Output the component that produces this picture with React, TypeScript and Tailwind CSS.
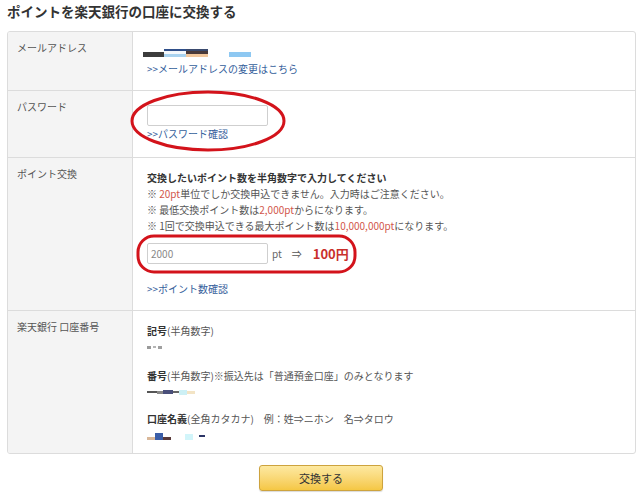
import React from "react";

const font = { fontFamily: '"Noto Sans CJK JP", "Noto Sans", sans-serif' };

function Label({ children }: { children: React.ReactNode }) {
  return (
    <div className="w-[125px] shrink-0 border-r border-[#dcdcdc] bg-[#f4f4f4] pl-[9px] pt-2 text-[10px] leading-4 text-[#555]">
      {children}
    </div>
  );
}

function Link({ children }: { children: React.ReactNode }) {
  return <div className="h-4 text-[10px] leading-4 text-[#35609b]">{children}</div>;
}

function Red({ children }: { children: React.ReactNode }) {
  return <span className="text-[#d2574c]">{children}</span>;
}

export default function App() {
  return (
    <div className="relative h-[495px] w-[642px] bg-white text-[#555]" style={font}>
      <div className="px-[7px]">
        {/* Title */}
        <div className="flex h-[31px] items-start pt-[2px] text-[13.5px] font-bold leading-[18px] text-[#333]">
          ポイントを楽天銀行の口座に交換する
        </div>

        {/* Form table */}
        <div className="w-[629px] overflow-hidden rounded-[3px] border border-[#dcdcdc]">
          {/* Mail */}
          <div className="flex h-[59px] border-b border-[#dcdcdc]">
            <Label>メールアドレス</Label>
            <div className="flex-1 pl-[10px] pt-[13px]">
              <div className="flex h-4 items-center">
                <span className="mt-[3px] h-[5px] w-[21px] bg-[#3c3c3c]" />
                <span className="flex h-[8px] w-[22px] flex-col">
                  <span className="h-[2px] bg-[#2f4f8a]" />
                  <span className="h-[3px] bg-[#f4f8fc]" />
                  <span className="h-[3px] bg-[#a9d3f0]" />
                </span>
                <span className="flex h-[8px] w-[22px] flex-col">
                  <span className="h-[2px] bg-[#3a4a6e]" />
                  <span className="h-[3px] bg-[#4a3a3a]" />
                  <span className="h-[3px] bg-[#f2c79c]" />
                </span>
                <span className="ml-[21px] mt-[3px] h-[5px] w-[22px] bg-[#8ec8f2]" />
              </div>
              <div className="pl-[4px]">
                <Link>&gt;&gt;メールアドレスの変更はこちら</Link>
              </div>
            </div>
          </div>

          {/* Password */}
          <div className="flex h-[67px] border-b border-[#dcdcdc]">
            <Label>パスワード</Label>
            <div className="flex-1 pl-[14px] pt-[14px]">
              <div className="h-[21px] w-[121px] rounded-[2px] border border-[#cfcfcf] bg-white" />
              <Link>&gt;&gt;パスワード確認</Link>
            </div>
          </div>

          {/* Points */}
          <div className="flex h-[153px] border-b border-[#dcdcdc]">
            <Label>ポイント交換</Label>
            <div className="flex-1 pl-[14px] pt-[12px] text-[10px] leading-4">
              <div className="font-bold text-[#333]">交換したいポイント数を半角数字で入力してください</div>
              <div>
                ※ <Red>20pt</Red>単位でしか交換申込できません。入力時はご注意ください。
              </div>
              <div>
                ※ 最低交換ポイント数は<Red>2,000pt</Red>からになります。
              </div>
              <div>
                ※ 1回で交換申込できる最大ポイント数は<Red>10,000,000pt</Red>になります。
              </div>
              <div className="mt-[9px] flex h-[21px] items-center">
                <div className="flex h-[21px] w-[121px] items-center rounded-[2px] border border-[#cfcfcf] bg-white pl-[3px] text-[#888]">
                  2000
                </div>
                <span className="ml-[4px] text-[#666]">pt</span>
                <span className="ml-[10px] text-[#555]">⇒</span>
                <span className="ml-[11px] text-[13px] font-bold text-[#c9302c]">100円</span>
              </div>
              <div className="mt-[17px]">
                <Link>&gt;&gt;ポイント数確認</Link>
              </div>
            </div>
          </div>

          {/* Bank account */}
          <div className="flex h-[142px]">
            <Label>楽天銀行 口座番号</Label>
            <div className="flex-1 pl-[14px] pt-[12px] text-[10px] leading-4">
              <div>
                <span className="font-bold text-[#333]">記号</span>(半角数字)
              </div>
              <div className="flex h-4 items-center gap-[2px]">
                <span className="h-[3px] w-[4px] bg-[#9a9a9a]" />
                <span className="h-[2px] w-[3px] bg-[#b5b5b5]" />
                <span className="h-[3px] w-[4px] bg-[#a0a0a0]" />
              </div>
              <div className="mt-[13px]">
                <span className="font-bold text-[#333]">番号</span>(半角数字)※振込先は「普通預金口座」のみとなります
              </div>
              <div className="flex h-4 items-center">
                <span className="h-[2px] w-[10px] bg-[#555]" />
                <span className="h-[3px] w-[6px] bg-[#888]" />
                <span className="h-[4px] w-[10px] bg-[#4a4f7a]" />
                <span className="h-[2px] w-[6px] bg-[#666]" />
                <span className="h-[5px] w-[8px] bg-[#cdf0f5]" />
                <span className="h-[3px] w-[8px] bg-[#f3e4c5]" />
              </div>
              <div className="mt-[11px]">
                <span className="font-bold text-[#333]">口座名義</span>(全角カタカナ)　例：姓⇒ニホン　名⇒タロウ
              </div>
              <div className="flex h-4 items-end pb-[3px]">
                <span className="h-[3px] w-[8px] bg-[#d9b89a]" />
                <span className="h-[7px] w-[8px] bg-[#3b5ea8]" />
                <span className="h-[3px] w-[8px] bg-[#5a3a3a]" />
                <span className="ml-[14px] h-[6px] w-[8px] bg-[#d2f5fa]" />
                <span className="ml-[6px] mb-[3px] h-[2px] w-[6px] bg-[#2c3566]" />
              </div>
            </div>
          </div>
        </div>

        {/* Submit */}
        <div className="mt-[11px] flex justify-center">
          <button className="h-[26px] w-[124px] rounded-[3px] border border-[#cda33e] bg-gradient-to-b from-[#fde9a0] to-[#f5c743] text-[11px] text-[#333] shadow-[0_1px_1px_rgba(0,0,0,0.15)]">
            交換する
          </button>
        </div>
      </div>

      {/* Red annotation marks */}
      <svg className="pointer-events-none absolute left-0 top-0" width="642" height="495">
        <ellipse cx="208" cy="121" rx="76" ry="29" fill="none" stroke="#d3131b" strokeWidth="3" />
        <rect x="138" y="236" width="217" height="36" rx="16" ry="16" fill="none" stroke="#d3131b" strokeWidth="3" />
      </svg>
    </div>
  );
}
